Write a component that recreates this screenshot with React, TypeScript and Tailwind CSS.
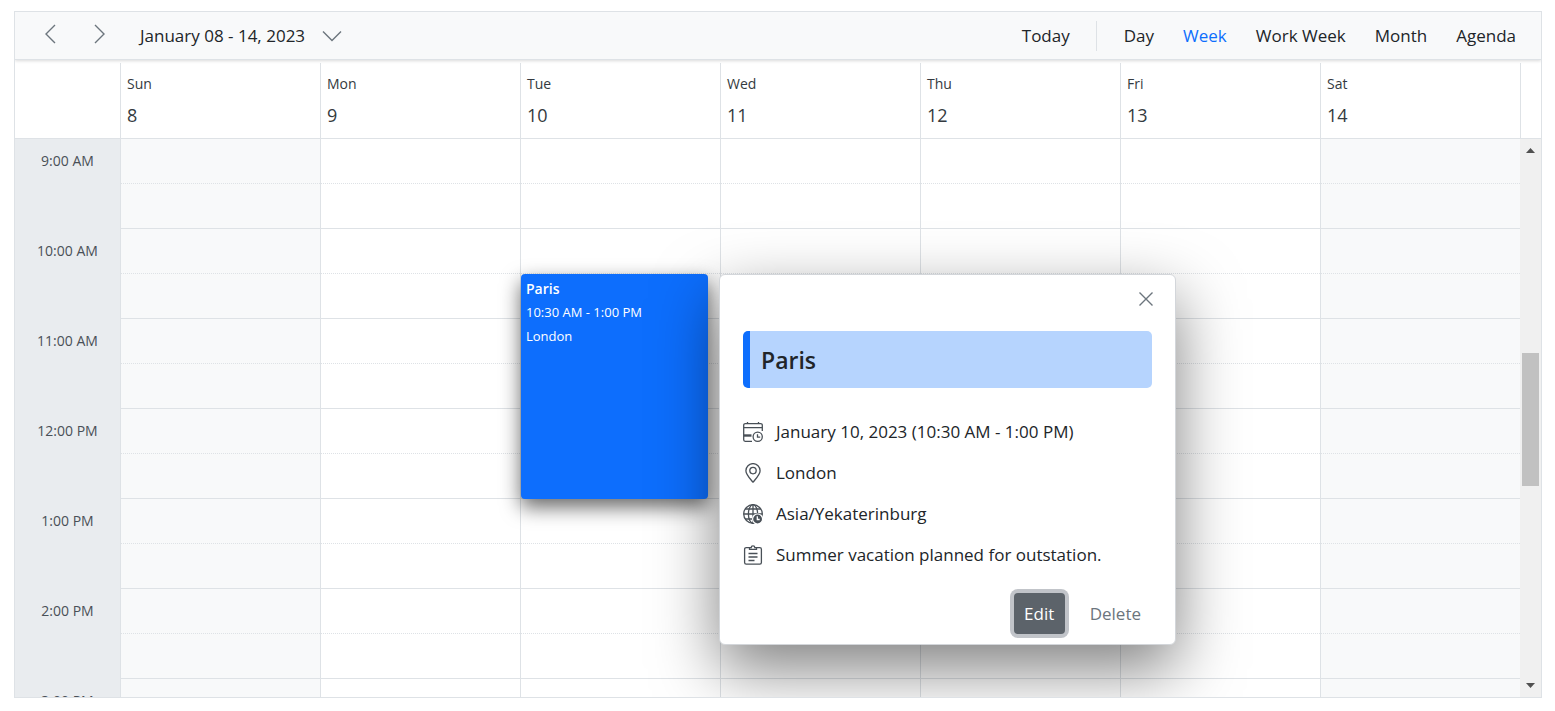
import React from "react";

const days = [
  { name: "Sun", date: 8 },
  { name: "Mon", date: 9 },
  { name: "Tue", date: 10 },
  { name: "Wed", date: 11 },
  { name: "Thu", date: 12 },
  { name: "Fri", date: 13 },
  { name: "Sat", date: 14 },
];

const hours = ["9:00 AM", "10:00 AM", "11:00 AM", "12:00 PM", "1:00 PM", "2:00 PM", "3:00 PM"];
const views = ["Day", "Week", "Work Week", "Month", "Agenda"];

function LineIcon({ d, className }: { d: string; className: string }) {
  return (
    <svg viewBox="0 0 20 20" className={className} fill="none" stroke="currentColor" strokeWidth="1.4" aria-hidden="true">
      <path d={d} />
    </svg>
  );
}

function CalendarClockIcon() {
  return (
    <svg viewBox="0 0 20 20" className="size-5" fill="none" stroke="currentColor" strokeWidth="1.3" aria-hidden="true">
      <path d="M9 19.300H2.200A1.600 1.600 0 0 1 .7 17.700V3.200a1.600 1.600 0 0 1 1.600-1.600h15.400a1.600 1.600 0 0 1 1.600 1.600V9M.7 5.600h18.600M4.500 0v2M15.500 0v2" />
      <path d="M.7 13.500H8.500" strokeWidth="2.400" />
      <circle cx="14.700" cy="14.700" r="4.600" />
      <path d="M14.500 12.200v3h2.700" />
    </svg>
  );
}

function PinIcon() {
  return (
    <svg viewBox="0 0 20 20" className="size-5" fill="none" stroke="currentColor" strokeWidth="1.3" aria-hidden="true">
      <path d="M10 19.200C7 15.500 2.900 11.500 2.900 7.700a7.100 7.100 0 0 1 14.200 0c0 3.800-4.100 7.800-7.100 11.500Z" />
      <circle cx="10" cy="7.600" r="3.200" />
    </svg>
  );
}

function GlobeClockIcon() {
  return (
    <svg viewBox="0 0 20 20" className="size-5" fill="none" stroke="currentColor" strokeWidth="1.3" aria-hidden="true">
      <circle cx="10" cy="10" r="9.300" />
      <ellipse cx="10" cy="10" rx="4.600" ry="9.300" />
      <path d="M10 .7v18.600M.7 10h18.600M2.300 5h15.400M2.300 15h15.400" />
      <circle cx="14.600" cy="15" r="5" fill="currentColor" stroke="#fff" strokeWidth="1.200" />
      <path d="M14.300 12.300v3.200h2.400" stroke="#fff" />
    </svg>
  );
}

function ClipboardIcon() {
  return (
    <svg viewBox="0 0 20 20" className="size-5" fill="none" stroke="currentColor" strokeWidth="1.3" aria-hidden="true">
      <path d="M7 2.600H3.200a1.600 1.600 0 0 0-1.600 1.600v13.400a1.600 1.600 0 0 0 1.600 1.600h13.600a1.600 1.600 0 0 0 1.600-1.600V4.200a1.600 1.600 0 0 0-1.600-1.600H13" />
      <path d="M6.500 2.600v1.800h7V2.600h-1.700a1.800 1.800 0 0 0-3.600 0Z" />
      <path d="M5.500 8.500h9M5.500 12h9M5.500 15.500h6" />
    </svg>
  );
}

const details = [
  { Icon: CalendarClockIcon, text: "January 10, 2023 (10:30 AM - 1:00 PM)" },
  { Icon: PinIcon, text: "London" },
  { Icon: GlobeClockIcon, text: "Asia/Yekaterinburg" },
  { Icon: ClipboardIcon, text: "Summer vacation planned for outstation." },
];

function EventPopup() {
  return (
    <div
      role="dialog"
      aria-label="Paris"
      className="absolute top-0 -left-px z-20 w-[457px] rounded-md border border-[#d3d6da] bg-white px-[23px] text-left text-[#212529] shadow-[0_24px_64px_rgba(0,0,0,0.5)]"
    >
      <div className="-mr-2 flex h-14 items-start justify-end pt-[10px]">
        <button type="button" aria-label="Close" className="flex size-7 items-center justify-center text-[#6c757d]">
          <LineIcon className="size-5" d="M3.500 3.500l13 13M16.500 3.500l-13 13" />
        </button>
      </div>
      <h2 className="flex h-[57px] items-center rounded-[5px] border-l-[7px] border-[#0d6efd] bg-[#b6d4fe] px-[11px] pt-px text-[23px] font-semibold">
        Paris
      </h2>
      <ul className="pt-[23px]">
        {details.map(({ Icon, text }) => (
          <li key={text} className="flex h-[41px] items-center gap-[13px] text-[17px]">
            <span className="text-[#495057]">
              <Icon />
            </span>
            {text}
          </li>
        ))}
      </ul>
      <div className="flex justify-end gap-[14px] pt-[18px] pb-[10px] text-[17px]">
        <button type="button" className="h-[41px] w-[51px] rounded bg-[#5c636a] text-white ring-4 ring-[#c1c4c9]">
          Edit
        </button>
        <button type="button" className="h-[41px] px-[11px] text-[#6c757d]">
          Delete
        </button>
      </div>
    </div>
  );
}

function Appointment() {
  return (
    <>
      <button
        type="button"
        className="absolute top-0 left-0 z-10 flex h-[225px] w-[94%] flex-col items-start rounded-sm bg-[#0d6efd] px-[5px] pt-1 text-[13px] leading-6 text-white shadow-[0_8px_20px_rgba(0,0,0,0.6)]"
      >
        <span className="text-sm leading-[22px] font-semibold">Paris</span>
        <span>10:30 AM - 1:00 PM</span>
        <span>London</span>
      </button>
      <div className="absolute top-0 left-full z-20">
        <EventPopup />
      </div>
    </>
  );
}

function Columns() {
  return (
    <colgroup>
      <col className="w-[105px]" />
      {days.map((d) => (
        <col key={d.name} />
      ))}
    </colgroup>
  );
}

export default function App() {
  return (
    <div className="h-screen bg-white pt-[11px] pr-[13px] pb-[13px] pl-[14px] font-['Open_Sans','Noto_Sans',sans-serif] text-[#212529]">
      <main className="flex h-full flex-col overflow-hidden border border-[#dee2e6]">
        <header className="z-10 flex h-12 shrink-0 items-center border-b border-[#dee2e6] bg-[#f8f9fa] pt-px pr-[10px] pl-[25px] text-[17px] shadow-[0_1px_3px_rgba(0,0,0,0.15)]">
          <div className="flex gap-[30px] pb-1 text-[#6c757d]">
            <button type="button" aria-label="Previous week" className="flex size-5">
              <LineIcon className="size-5" d="M15 1l-9 9 9 9" />
            </button>
            <button type="button" aria-label="Next week" className="flex size-5">
              <LineIcon className="size-5" d="M5 1l9 9-9 9" />
            </button>
          </div>
          <button type="button" className="ml-[30px] flex items-center gap-[17px]">
            January 08 - 14, 2023
            <LineIcon className="size-5 text-[#6c757d]" d="M1 5.500l9 9 9-9" />
          </button>
          <nav className="ml-auto flex items-center">
            <button type="button" className="px-[14px]">Today</button>
            <span className="mx-3 h-[30px] w-px bg-[#dee2e6]" />
            <div className="flex gap-[29px] px-[15px]">
              {views.map((v) => (
                <button key={v} type="button" className={v === "Week" ? "text-[#0d6efd]" : ""}>
                  {v}
                </button>
              ))}
            </div>
          </nav>
        </header>

        <div className="shrink-0 border-b border-[#dee2e6] pt-[3px] pr-[20px]">
          <table className="w-full table-fixed border-separate border-spacing-0 border-r border-[#dee2e6]">
            <Columns />
            <thead>
              <tr>
                <th className="h-[75px] p-0" aria-label="Time" />
                {days.map((d) => (
                  <th key={d.name} scope="col" className="border-l border-[#dee2e6] p-0 pl-[6px] text-left align-top font-normal text-[#343a40]">
                    <span className="mt-[10px] block text-sm leading-[22px]">{d.name}</span>
                    <span className="mt-[6px] block text-lg leading-7">{d.date}</span>
                  </th>
                ))}
              </tr>
            </thead>
          </table>
        </div>

        <div className="flex min-h-0 flex-1">
          <div className="min-w-0 flex-1 overflow-hidden">
            <table className="w-full table-fixed border-separate border-spacing-0">
              <Columns />
              <tbody>
                {hours.map((h, i) => (
                  <React.Fragment key={h}>
                    <tr className="h-[45px]">
                      <th scope="row" className="bg-[#e9ecef] p-0 pb-[2px] text-center text-sm font-normal text-[#495057]">
                        {h}
                      </th>
                      {days.map((d) => (
                        <td
                          key={d.name}
                          className={
                            d.name === "Sun" || d.name === "Sat"
                              ? "border-b border-l border-[#dee2e6] bg-[#f8f9fa] p-0 [border-bottom-style:dotted]"
                              : "border-b border-l border-[#dee2e6] p-0 [border-bottom-style:dotted]"
                          }
                        />
                      ))}
                    </tr>
                    <tr className="h-[45px]">
                      <td className="bg-[#e9ecef] p-0" />
                      {days.map((d) => (
                        <td
                          key={d.name}
                          className={
                            d.name === "Sun" || d.name === "Sat"
                              ? "relative border-b border-l border-[#dee2e6] bg-[#f8f9fa] p-0"
                              : "relative border-b border-l border-[#dee2e6] p-0"
                          }
                        >
                          {i === 1 && d.name === "Tue" && <Appointment />}
                        </td>
                      ))}
                    </tr>
                  </React.Fragment>
                ))}
              </tbody>
            </table>
          </div>
          <div aria-hidden="true" className="flex w-[21px] shrink-0 flex-col items-center bg-[#f0f0f0] py-[9px] text-[#505050]">
            <svg viewBox="0 0 9 5" className="h-[5px] w-[9px]" fill="currentColor">
              <path d="M0 5L4.500 0 9 5Z" />
            </svg>
            <div className="flex w-full flex-1 flex-col px-[2px]">
              <div className="grow-[200]" />
              <div className="grow-[133] bg-[#c1c1c1]" />
              <div className="grow-[197]" />
            </div>
            <svg viewBox="0 0 9 5" className="h-[5px] w-[9px]" fill="currentColor">
              <path d="M0 0L4.500 5 9 0Z" />
            </svg>
          </div>
        </div>
      </main>
    </div>
  );
}
